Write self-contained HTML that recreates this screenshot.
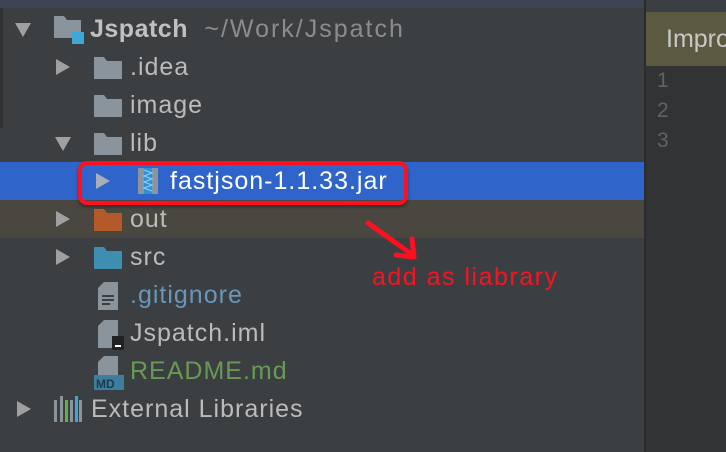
<!DOCTYPE html>
<html><head><meta charset="utf-8"><style>
*{margin:0;padding:0;box-sizing:border-box}
body{width:726px;height:452px;background:#3c3f41;position:relative;overflow:hidden;font-family:"Liberation Sans",sans-serif;}
.t{position:absolute;font-size:25px;letter-spacing:1px;color:#bbbbbb;white-space:nowrap;line-height:38px;height:38px}
.tri{position:absolute;width:0;height:0}
.tr{border-top:8px solid transparent;border-bottom:8px solid transparent;border-left:14px solid #a0a0a0}
.td{border-left:8px solid transparent;border-right:8px solid transparent;border-top:14px solid #a0a0a0}
.fold{position:absolute;width:28px;height:22px}
</style></head><body>
<div style="position:absolute;left:0;top:0;width:644px;height:8px;background:#3d4554"></div>
<div style="position:absolute;left:0;top:8px;width:3px;height:120px;background:#2f3133"></div>
<div style="position:absolute;left:0;top:162px;width:644px;height:38px;background:#2f65ca"></div>
<div style="position:absolute;left:0;top:200px;width:644px;height:38px;background:#4a4740"></div>
<div style="position:absolute;left:644px;top:0;width:2px;height:452px;background:#2b2b2b"></div>
<div style="position:absolute;left:646px;top:0;width:80px;height:12px;background:#3c3f41"></div>
<div style="position:absolute;left:646px;top:12px;width:80px;height:54px;background:#5b5a40"></div>
<div style="position:absolute;left:646px;top:66px;width:80px;height:386px;background:#313335"></div>
<div class="t" style="left:666px;top:20px;color:#c8c8c8;font-size:25px;letter-spacing:0">Impro</div>
<div class="t" style="left:657px;top:66px;color:#606366;font-size:21px;line-height:30px;letter-spacing:0">1<br>2<br>3</div>

<div class="tri td" style="left:15px;top:23px"></div>
<svg style="position:absolute;left:54px;top:16px" width="30" height="30"><path d="M0 0h10l3 4h14v18H0z" fill="#8a949c"/><rect x="18" y="16" width="12" height="12" fill="#3fa7d6"/></svg>
<div class="t" style="left:90px;top:10px;font-weight:bold;color:#c0c0c0;letter-spacing:0.5px">Jspatch <span style="font-weight:normal;color:#8c8c8c;letter-spacing:2px">&nbsp;~/Work/Jspatch</span></div>

<div class="tri tr" style="left:56px;top:59px"></div>
<svg class="fold" style="left:94px;top:57px"><path d="M0 0h10l3 4h15v18H0z" fill="#8a949c"/></svg>
<div class="t" style="left:130px;top:48px">.idea</div>

<svg class="fold" style="left:94px;top:95px"><path d="M0 0h10l3 4h15v18H0z" fill="#8a949c"/></svg>
<div class="t" style="left:130px;top:86px">image</div>

<div class="tri td" style="left:55px;top:137px"></div>
<svg class="fold" style="left:94px;top:133px"><path d="M0 0h10l3 4h15v18H0z" fill="#8a949c"/></svg>
<div class="t" style="left:130px;top:124px">lib</div>

<div class="tri tr" style="left:96px;top:173px;border-left-color:#a8aeb8"></div>
<svg style="position:absolute;left:138px;top:168px" width="20" height="26"><rect width="20" height="26" fill="#8a949c"/><rect x="6" width="8" height="26" fill="#2f8fd8"/><path d="M6 2l8 3-8 3 8 3-8 3 8 3-8 3 8 3" stroke="#8ed0ff" fill="none" stroke-width="1.2"/></svg>
<div class="t" style="left:170px;top:162px;color:#ffffff">fastjson-1.1.33.jar</div>
<div style="position:absolute;left:78px;top:161px;width:330px;height:44px;border:4px solid #ff1020;border-radius:9px;box-shadow:0 2px 3px rgba(0,0,0,.4)"></div>

<div class="tri tr" style="left:56px;top:211px"></div>
<svg class="fold" style="left:94px;top:209px"><path d="M0 0h10l3 4h15v18H0z" fill="#b35a2a"/></svg>
<div class="t" style="left:130px;top:200px">out</div>

<div class="tri tr" style="left:56px;top:249px"></div>
<svg class="fold" style="left:94px;top:247px"><path d="M0 0h10l3 4h15v18H0z" fill="#3d8eb0"/></svg>
<div class="t" style="left:130px;top:238px">src</div>

<svg style="position:absolute;left:98px;top:282px" width="20" height="28"><path d="M6 0h14v28H0V6z" fill="#8a949c"/><path d="M4 14h12M4 18h12M4 22h8" stroke="#3c3f41" stroke-width="2"/></svg>
<div class="t" style="left:130px;top:276px;color:#6897bb">.gitignore</div>

<svg style="position:absolute;left:98px;top:320px" width="26" height="30"><path d="M6 0h14v28H0V6z" fill="#8a949c"/><rect x="14" y="16" width="12" height="14" fill="#222"/><rect x="17" y="25" width="6" height="2" fill="#fff"/></svg>
<div class="t" style="left:130px;top:314px">Jspatch.iml</div>

<svg style="position:absolute;left:94px;top:356px" width="30" height="34"><path d="M10 0h14v22H4V6z" fill="#8a949c"/><rect x="0" y="19" width="30" height="15" fill="#3d7d9e"/><text x="2" y="32" font-family="Liberation Sans" font-size="12" font-weight="bold" fill="#1f3a4a">MD</text></svg>
<div class="t" style="left:130px;top:352px;color:#6a9955">README.md</div>

<div class="tri tr" style="left:17px;top:401px"></div>
<svg style="position:absolute;left:54px;top:396px" width="28" height="26"><rect x="0" y="4" width="3" height="22" fill="#8a949c"/><rect x="6" y="0" width="3" height="26" fill="#8a949c"/><rect x="11" y="4" width="3" height="22" fill="#5fb33a"/><rect x="16" y="4" width="3" height="22" fill="#8a949c"/><rect x="21" y="0" width="3" height="26" fill="#3fa7d6"/><rect x="25" y="4" width="3" height="22" fill="#8a949c"/></svg>
<div class="t" style="left:91px;top:390px">External Libraries</div>

<svg style="position:absolute;left:360px;top:215px" width="70" height="55"><path d="M8 8L50 38" stroke="#ff1020" stroke-width="5" stroke-linecap="round"/><path d="M36 40L54 42L52 24" stroke="#ff1020" stroke-width="5" fill="none" stroke-linecap="round" stroke-linejoin="round"/></svg>
<div class="t" style="left:372px;top:258px;color:#ff1020;font-size:25px;letter-spacing:1.5px">add as liabrary</div>
</body></html>
